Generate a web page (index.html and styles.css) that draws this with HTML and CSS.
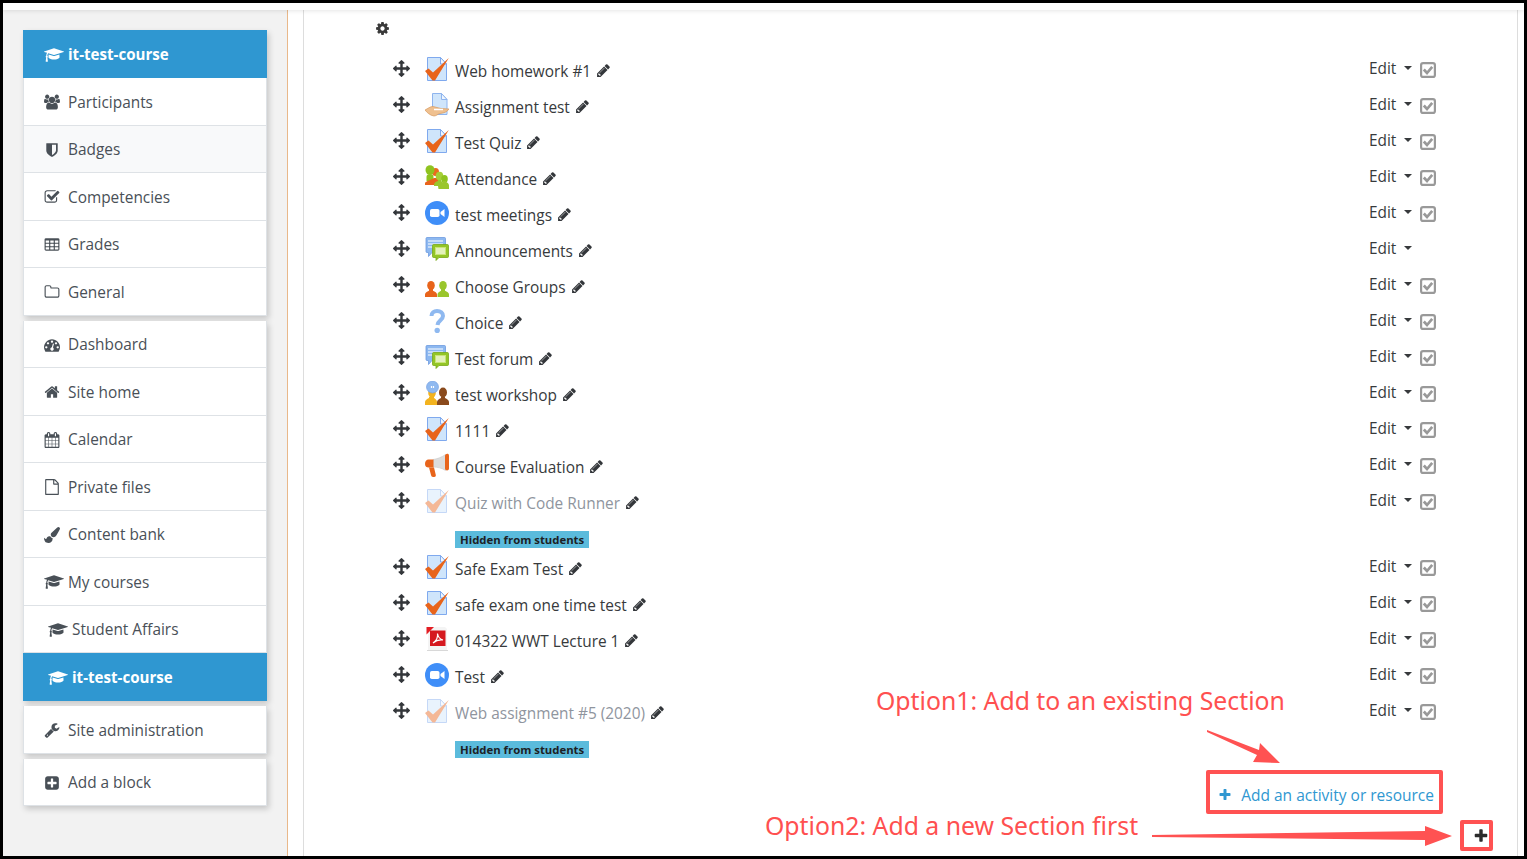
FILE: index.html
```html
<!DOCTYPE html>
<html lang="en">
<head>
<meta charset="utf-8">
<title>it-test-course</title>
<link rel="stylesheet" href="styles.css">
</head>
<body>
<svg class="defs" width="0" height="0" aria-hidden="true">
<defs>
<symbol id="fa-cap" viewBox="0 0 2304 1792"><path d="M1774 836l18 316q4 69-82 128t-235 93.5-323 34.5-323-34.5-235-93.5-82-128l18-316 574 181q22 7 48 7t48-7zm530-324q0 23-22 31l-1120 352q-4 1-10 1t-10-1l-652-206q-43 34-71 111.5t-34 178.5q63 36 63 109 0 69-58 107l58 433q2 14-8 25-9 11-24 11h-192q-15 0-24-11-10-11-8-25l58-433q-58-38-58-107 0-73 65-111 11-207 98-330l-333-104q-22-8-22-31t22-31l1120-352q4-1 10-1t10 1l1120 352q22 8 22 31z"/></symbol>
<symbol id="fa-users" viewBox="0 0 1920 1792"><path d="M593 896q-162 5-265 128h-134q-82 0-138-40.5t-56-118.5q0-353 124-353 6 0 43.5 21t97.5 42.5 119 21.5q67 0 133-23-5 37-5 66 0 139 81 256zm1071 637q0 120-73 189.5t-194 69.5h-874q-121 0-194-69.5t-73-189.5q0-53 3.5-103.5t14-109 26.5-108.5 43-97.5 62-81 85.5-53.5 111.5-20q10 0 43 21.5t73 48 107 48 135 21.5 135-21.5 107-48 73-48 43-21.5q61 0 111.5 20t85.5 53.5 62 81 43 97.5 26.5 108.5 14 109 3.5 103.5zm-1024-1277q0 106-75 181t-181 75-181-75-75-181 75-181 181-75 181 75 75 181zm704 384q0 159-112.5 271.5t-271.5 112.5-271.5-112.5-112.5-271.5 112.5-271.5 271.5-112.5 271.5 112.5 112.5 271.5zm576 225q0 78-56 118.5t-138 40.5h-134q-103-123-265-128 81-117 81-256 0-29-5-66 66 23 133 23 59 0 119-21.5t97.5-42.5 43.5-21q124 0 124 353zm-128-609q0 106-75 181t-181 75-181-75-75-181 75-181 181-75 181 75 75 181z"/></symbol>
<symbol id="fa-shield" viewBox="0 0 1792 1792"><path d="M1344 960v-640h-448v1137q119-63 213-137 235-184 235-360zm192-768v768q0 86-33.5 170.5t-83 150-118 127.5-126.5 103-121 77.5-89.5 49.5-42.5 20q-12 6-26 6t-26-6q-16-7-42.5-20t-89.5-49.5-121-77.5-126.5-103-118-127.5-83-150-33.5-170.5v-768q0-26 19-45t45-19h1152q26 0 45 19t19 45z"/></symbol>
<symbol id="fa-check" viewBox="0 0 1792 1792"><path d="M1472 930v318q0 119-84.5 203.5t-203.5 84.5h-832q-119 0-203.5-84.5t-84.5-203.5v-832q0-119 84.5-203.5t203.5-84.5h832q63 0 117 25 15 7 18 23 3 17-9 29l-49 49q-10 10-23 10-3 0-9-2-23-6-45-6h-832q-66 0-113 47t-47 113v832q0 66 47 113t113 47h832q66 0 113-47t47-113v-254q0-13 9-22l64-64q10-10 23-10 6 0 12 3 20 8 20 29zm231-489l-814 814q-24 24-57 24t-57-24l-430-430q-24-24-24-57t24-57l110-110q24-24 57-24t57 24l263 263 647-647q24-24 57-24t57 24l110 110q24 24 24 57t-24 57z"/></symbol>
<symbol id="fa-table" viewBox="0 0 1792 1792"><path d="M576 1376v-192q0-14-9-23t-23-9h-320q-14 0-23 9t-9 23v192q0 14 9 23t23 9h320q14 0 23-9t9-23zm0-384v-192q0-14-9-23t-23-9h-320q-14 0-23 9t-9 23v192q0 14 9 23t23 9h320q14 0 23-9t9-23zm512 384v-192q0-14-9-23t-23-9h-320q-14 0-23 9t-9 23v192q0 14 9 23t23 9h320q14 0 23-9t9-23zm-512-768v-192q0-14-9-23t-23-9h-320q-14 0-23 9t-9 23v192q0 14 9 23t23 9h320q14 0 23-9t9-23zm512 384v-192q0-14-9-23t-23-9h-320q-14 0-23 9t-9 23v192q0 14 9 23t23 9h320q14 0 23-9t9-23zm512 384v-192q0-14-9-23t-23-9h-320q-14 0-23 9t-9 23v192q0 14 9 23t23 9h320q14 0 23-9t9-23zm-512-768v-192q0-14-9-23t-23-9h-320q-14 0-23 9t-9 23v192q0 14 9 23t23 9h320q14 0 23-9t9-23zm512 384v-192q0-14-9-23t-23-9h-320q-14 0-23 9t-9 23v192q0 14 9 23t23 9h320q14 0 23-9t9-23zm0-384v-192q0-14-9-23t-23-9h-320q-14 0-23 9t-9 23v192q0 14 9 23t23 9h320q14 0 23-9t9-23zm128-320v1088q0 66-47 113t-113 47h-1344q-66 0-113-47t-47-113v-1088q0-66 47-113t113-47h1344q66 0 113 47t47 113z"/></symbol>
<symbol id="fa-folder" viewBox="0 0 1792 1792"><path d="M1600 1312v-704q0-40-28-68t-68-28h-704q-40 0-68-28t-28-68v-64q0-40-28-68t-68-28h-320q-40 0-68 28t-28 68v960q0 40 28 68t68 28h1216q40 0 68-28t28-68zm128-704v704q0 92-66 158t-158 66h-1216q-92 0-158-66t-66-158v-960q0-92 66-158t158-66h320q92 0 158 66t66 158v32h672q92 0 158 66t66 158z"/></symbol>
<symbol id="fa-gauge" viewBox="0 0 1792 1792"><path d="M384 1152q0-53-37.5-90.5t-90.5-37.5-90.5 37.5-37.5 90.5 37.5 90.5 90.5 37.5 90.5-37.5 37.5-90.5zm192-448q0-53-37.5-90.5t-90.5-37.5-90.5 37.5-37.5 90.5 37.5 90.5 90.5 37.5 90.5-37.5 37.5-90.5zm428 481l101-382q6-26-7.5-48.5t-38.5-29.5-48 6.5-30 39.5l-101 382q-60 5-107 43.5t-63 98.5q-20 77 20 146t117 89 146-20 89-117q16-60-6-117t-72-91zm660-33q0-53-37.5-90.5t-90.5-37.5-90.5 37.5-37.5 90.5 37.5 90.5 90.5 37.5 90.5-37.5 37.5-90.5zm-640-640q0-53-37.5-90.5t-90.5-37.5-90.5 37.5-37.5 90.5 37.5 90.5 90.5 37.5 90.5-37.5 37.5-90.5zm448 192q0-53-37.5-90.5t-90.5-37.5-90.5 37.5-37.5 90.5 37.5 90.5 90.5 37.5 90.5-37.5 37.5-90.5zm320 448q0 261-141 483-19 29-54 29h-1402q-35 0-54-29-141-221-141-483 0-182 71-348t191-286 286-191 348-71 348 71 286 191 191 286 71 348z"/></symbol>
<symbol id="fa-home" viewBox="0 0 1792 1792"><path d="M1472 992v480q0 26-19 45t-45 19h-384v-384h-256v384h-384q-26 0-45-19t-19-45v-480q0-1 .5-3t.5-3l575-474 575 474q1 2 1 6zm223-69l-62 74q-8 9-21 11h-3q-13 0-21-7l-692-577-692 577q-12 8-24 7-13-2-21-11l-62-74q-8-10-7-23.5t11-21.5l719-599q32-26 76-26t76 26l244 204v-195q0-14 9-23t23-9h192q14 0 23 9t9 23v408l219 182q10 8 11 21.5t-7 23.5z"/></symbol>
<symbol id="fa-calendar" viewBox="0 0 1792 1792"><path d="M192 1664h288v-288h-288v288zm352 0h320v-288h-320v288zm-352-352h288v-320h-288v320zm352 0h320v-320h-320v320zm-352-384h288v-288h-288v288zm736 736h320v-288h-320v288zm-384-736h320v-288h-320v288zm768 736h288v-288h-288v288zm-384-352h320v-320h-320v320zm-352-864v-288q0-13-9.5-22.5t-22.5-9.5h-64q-13 0-22.5 9.5t-9.5 22.5v288q0 13 9.5 22.5t22.5 9.5h64q13 0 22.5-9.5t9.5-22.5zm736 864h288v-320h-288v320zm-384-384h320v-288h-320v288zm384 0h288v-288h-288v288zm32-480v-288q0-13-9.5-22.5t-22.5-9.5h-64q-13 0-22.5 9.5t-9.5 22.5v288q0 13 9.5 22.5t22.5 9.5h64q13 0 22.5-9.5t9.5-22.5zm384-64v1280q0 52-38 90t-90 38h-1408q-52 0-90-38t-38-90v-1280q0-52 38-90t90-38h128v-96q0-66 47-113t113-47h64q66 0 113 47t47 113v96h384v-96q0-66 47-113t113-47h64q66 0 113 47t47 113v96h128q52 0 90 38t38 90z"/></symbol>
<symbol id="fa-file" viewBox="0 0 1792 1792"><path d="M1596 380q28 28 48 76t20 88v1152q0 40-28 68t-68 28h-1344q-40 0-68-28t-28-68v-1600q0-40 28-68t68-28h896q40 0 88 20t76 48zm-444-244v376h376q-10-29-22-41l-313-313q-12-12-41-22zm384 1528v-1024h-416q-40 0-68-28t-28-68v-416h-768v1536h1280z"/></symbol>
<symbol id="fa-brush" viewBox="0 0 1792 1792"><path d="M1615 0q70 0 122.5 46.5t52.5 116.5q0 63-45 151-332 629-465 752-97 91-218 91-126 0-216.5-92.5t-90.5-219.5q0-128 92-212l638-579q59-54 130-54zm-909 1034q39 76 106.5 130t150.5 76l1 71q4 213-129.5 347t-348.5 134q-123 0-218-46.5t-152.5-127.5-86.5-183-29-220q7 5 41 30t62 44.5 59 36.5 46 17q41 0 55-37 25-66 57.5-112.5t69.5-76 88-47.5 103-25.5 125-10.5z"/></symbol>
<symbol id="fa-wrench" viewBox="0 0 1792 1792"><path d="M448 1472q0-26-19-45t-45-19-45 19-19 45 19 45 45 19 45-19 19-45zm644-420l-682 682q-37 37-90 37-52 0-91-37l-106-108q-38-36-38-90 0-53 38-91l681-681q39 98 114.5 173.5t173.5 114.5zm634-435q0 39-23 106-47 134-164.5 217.5t-258.5 83.5q-185 0-316.5-131.5t-131.5-316.5 131.5-316.5 316.5-131.5q58 0 121.5 16.5t107.5 46.5q16 11 16 28t-16 28l-293 169v224l193 107q5-3 79-48.5t135.5-81 70.5-35.5q15 0 23.5 10t8.5 25z"/></symbol>
<symbol id="fa-plus-sq" viewBox="0 0 1792 1792"><path d="M1408 960v-128q0-26-19-45t-45-19h-320v-320q0-26-19-45t-45-19h-128q-26 0-45 19t-19 45v320h-320q-26 0-45 19t-19 45v128q0 26 19 45t45 19h320v320q0 26 19 45t45 19h128q26 0 45-19t19-45v-320h320q26 0 45-19t19-45zm256-544v960q0 119-84.5 203.5t-203.5 84.5h-960q-119 0-203.5-84.5t-84.5-203.5v-960q0-119 84.5-203.5t203.5-84.5h960q119 0 203.5 84.5t84.5 203.5z"/></symbol>
<symbol id="fa-plus" viewBox="0 0 1792 1792"><path d="M1600 736v192q0 40-28 68t-68 28h-416v416q0 40-28 68t-68 28h-192q-40 0-68-28t-28-68v-416h-416q-40 0-68-28t-28-68v-192q0-40 28-68t68-28h416v-416q0-40 28-68t68-28h192q40 0 68 28t28 68v416h416q40 0 68 28t28 68z"/></symbol>
<symbol id="fa-cog" viewBox="0 0 1792 1792"><path d="M1152 896q0-106-75-181t-181-75-181 75-75 181 75 181 181 75 181-75 75-181zm512-109v222q0 12-8 23t-20 13l-185 28q-19 54-39 91 35 50 107 138 10 12 10 25t-9 23q-27 37-99 108t-94 71q-12 0-26-9l-138-108q-44 23-91 38-16 136-29 186-7 28-36 28h-222q-14 0-24.5-8.5t-11.5-21.5l-28-184q-49-16-90-37l-141 107q-10 9-25 9-14 0-25-11-126-114-165-168-7-10-7-23 0-12 8-23 15-21 51-66.5t54-70.5q-27-50-41-99l-183-27q-13-2-21-12.5t-8-23.5v-222q0-12 8-23t19-13l186-28q14-46 39-92-40-57-107-138-10-12-10-24 0-10 9-23 26-36 98.5-107.5t94.5-71.5q13 0 26 10l138 107q44-23 91-38 16-136 29-186 7-28 36-28h222q14 0 24.5 8.5t11.5 21.5l28 184q49 16 90 37l142-107q9-9 24-9 13 0 25 10 129 119 165 170 7 8 7 22 0 12-8 23-15 21-51 66.5t-54 70.5q26 50 41 98l183 28q13 2 21 12.5t8 23.5z"/></symbol>
<symbol id="fa-arrows" viewBox="0 0 1792 1792"><path d="M1792 896q0 26-19 45l-256 256q-19 19-45 19t-45-19-19-45v-128h-384v384h128q26 0 45 19t19 45-19 45l-256 256q-19 19-45 19t-45-19l-256-256q-19-19-19-45t19-45 45-19h128v-384h-384v128q0 26-19 45t-45 19-45-19l-256-256q-19-19-19-45t19-45l256-256q19-19 45-19t45 19 19 45v128h384v-384h-128q-26 0-45-19t-19-45 19-45l256-256q19-19 45-19t45 19l256 256q19 19 19 45t-19 45-45 19h-128v384h384v-128q0-26 19-45t45-19 45 19l256 256q19 19 19 45z"/></symbol>
<symbol id="fa-pencil" viewBox="0 0 1792 1792"><path d="M491 1536l91-91-235-235-91 91v107h128v128h107zm523-928q0-22-22-22-10 0-17 7l-542 542q-7 7-7 17 0 22 22 22 10 0 17-7l542-542q7-7 7-17zm-54-192l416 416-832 832h-416v-416zm683 96q0 53-37 90l-166 166-416-416 166-165q36-38 90-38 53 0 91 38l235 234q37 39 37 91z"/></symbol>
<symbol id="box-check" viewBox="0 0 16 16"><rect x="1.100" y="1.100" width="13.800" height="13.800" rx="2" fill="#fff" stroke="#999" stroke-width="2.200"/><path d="M3.800 7.500l3.200 3.500 5.200-6.200" fill="none" stroke="#999" stroke-width="2.700"/></symbol>

<symbol id="m-quiz" viewBox="0 0 24 24"><path d="M2.500.5h13l6 6.500v16.500h-19z" fill="#cfe5fb" stroke="#7fa9ee"/><path d="M15.500.5v6.500h6z" fill="#eef6fe" stroke="#7fa9ee"/><path d="M0 14l3.500-2.500 4.500 4L23.800 1 10 23.500H7.500z" fill="#e8641b"/></symbol>
<symbol id="m-assign" viewBox="0 0 24 24"><path d="M7.500.5h9l5.500 6v15h-14.500z" fill="#cfe5fb" stroke="#8eb4ee"/><path d="M16.500.5v6h5.500z" fill="#eef6fe" stroke="#8eb4ee"/><path d="M0 17c3-1.500 5-3.500 8-3.500 3 .5 5 1.500 8 2l8 .5c-2 3-5 4-9 4.500-2 .5-4 2.500-6 2.500-4-.5-7-3.500-9-6z" fill="#efc08f" stroke="#d79a5f" stroke-width=".7"/><path d="M9 16.500h9" stroke="#fff" stroke-width="1.500"/></symbol>
<symbol id="m-attend" viewBox="0 0 24 24"><ellipse cx="10.500" cy="7" rx="3.500" ry="4" fill="#ea6b1f"/><ellipse cx="5" cy="5" rx="4.500" ry="4.800" fill="#8fc31f"/><path d="M1.500 16V12c0-2 1-3 3.500-3s3.500 1 3.500 3v4z" fill="#8fc31f"/><path d="M0 20v-2c1-2 6-3 9-5h6v7z" fill="#e8641b"/><ellipse cx="14.500" cy="11" rx="3.800" ry="4.300" fill="#a5cf38"/><ellipse cx="19.500" cy="14" rx="3.300" ry="4" fill="#8fc31f"/><path d="M9 20c0-2.500 2-3.500 4-4v-1h3v1c1 .5 1.500 1 2 1.500V16l3 0v1c1.500.5 3 1.500 3 3.500V24H13.500L13 21H9z" fill="#9ac62c"/></symbol>
<symbol id="m-zoom" viewBox="0 0 24 24"><circle cx="12" cy="12" r="12" fill="#3f8ef8"/><rect x="5" y="8" width="9.500" height="8" rx="1.800" fill="#fff"/><path d="M15.500 11l4-3v8l-4-3z" fill="#fff"/></symbol>
<symbol id="m-forum" viewBox="0 0 24 24"><path d="M1 1.500c0-.6.500-1 1-1h17.500c.6 0 1 .4 1 1v13c0 .6-.4 1-1 1H7l-3.500 4v-4H2c-.6 0-1-.4-1-1z" fill="#8db8f0" stroke="#6d9be0" stroke-width=".8"/><path d="M3 4h15M3 7h15M3 10h8" stroke="#fff" stroke-width="1.200"/><path d="M7.500 8.500c0-.5.400-1 1-1h14c.6 0 1 .5 1 1v11c0 .6-.4 1-1 1H14l-3 3v-3H8.500c-.6 0-1-.4-1-1z" fill="#93c526" stroke="#7aa819" stroke-width=".8"/><rect x="10" y="10" width="11" height="8" fill="#c8e477"/><path d="M11 12h9M11 14h9M11 16h9" stroke="#fff"/></symbol>
<symbol id="m-groups" viewBox="0 0 24 24"><ellipse cx="6" cy="12.500" rx="3.800" ry="4.500" fill="#e8641b"/><path d="M0 24v-2.500c0-2 2-2.800 4-3.800v-2h4v2c2 1 4 1.800 4 3.800V24z" fill="#e8641b"/><ellipse cx="18" cy="12.500" rx="3.800" ry="4.500" fill="#9ac62c"/><path d="M12.500 24v-2.500c0-2 2-2.800 3.500-3.800v-2h4v2c2 1 4 1.800 4 3.800V24z" fill="#9ac62c"/></symbol>
<symbol id="m-choice" viewBox="0 0 24 24"><path d="M6.500 7c0-3.500 2.500-5 5.500-5 3.500 0 6 2 6 5 0 4-5 4.500-5.500 9" fill="none" stroke="#8fb9f0" stroke-width="4"/><circle cx="12.200" cy="21.500" r="2.700" fill="#8fb9f0"/></symbol>
<symbol id="m-workshop" viewBox="0 0 24 24"><ellipse cx="18" cy="11.500" rx="4" ry="5" fill="#8a4a1c"/><path d="M12 24v-3c0-2 2-3 4-4v-1h4v1c2 1 4 2 4 4v3z" fill="#8a4a1c"/><ellipse cx="7" cy="12" rx="3.800" ry="4.500" fill="#f3b31e"/><path d="M0 24v-3c0-2 2-3 4-4v-1h5v1c1 .5 3 2 3 4v3z" fill="#f3b31e"/><circle cx="7.500" cy="6" r="6" fill="#8fb9f0" stroke="#6d9be0" stroke-width=".6"/><path d="M6.500 5v2M8.500 5v2" stroke="#fff" stroke-width="1.200"/></symbol>
<symbol id="m-feedback" viewBox="0 0 24 24"><path d="M8 6.500C12 6 17 4 20.500 1.500v16C17 15 12 14 8 14z" fill="#dcdcdc" stroke="#c4c4c4" stroke-width=".5"/><path d="M0 11c0-3 1.500-4.500 3.500-4.500H8.500V14.500H3.500C1.500 14.500 0 13.500 0 11z" fill="#e8641b"/><path d="M4 14.500h5l1.800 7.500c.2 1.200-.5 2-1.500 2H8c-1 0-1.800-.8-2-2z" fill="#e8641b"/><path d="M20 3C20 .5 24 0 24 2.500v13c0 2.500-4 2.500-4 0z" fill="#e8641b"/></symbol>
<symbol id="m-pdf" viewBox="0 0 24 24"><path d="M3 0h17l2 2v21H3z" fill="#f4f4f4"/><path d="M2 23.500h21" stroke="#d8d8d8"/><path d="M1.500 0H9L1.500 7.500z" fill="#e31e24"/><rect x="5" y="3.500" width="15.500" height="15.500" fill="#d5191f"/><path d="M8 16c3-2 5-6 4.500-9.500 .5 3 2 5.500 5.500 6.500-3-.5-7 .5-10 3z" fill="none" stroke="#fff" stroke-width="1.200"/></symbol>
</defs>
</svg>

<div class="frame">
  <div class="topbar"></div>
  <div class="layout">
    <aside class="sidebar">
      <nav class="panel">
        <a class="item head"><svg class="fi wide"><use href="#fa-cap"/></svg>it-test-course</a>
        <a class="item"><svg class="fi"><use href="#fa-users"/></svg>Participants</a>
        <a class="item tint"><svg class="fi"><use href="#fa-shield"/></svg>Badges</a>
        <a class="item"><svg class="fi"><use href="#fa-check"/></svg>Competencies</a>
        <a class="item"><svg class="fi"><use href="#fa-table"/></svg>Grades</a>
        <a class="item"><svg class="fi"><use href="#fa-folder"/></svg>General</a>
      </nav>
      <nav class="panel">
        <a class="item"><svg class="fi"><use href="#fa-gauge"/></svg>Dashboard</a>
        <a class="item"><svg class="fi"><use href="#fa-home"/></svg>Site home</a>
        <a class="item"><svg class="fi"><use href="#fa-calendar"/></svg>Calendar</a>
        <a class="item"><svg class="fi"><use href="#fa-file"/></svg>Private files</a>
        <a class="item"><svg class="fi"><use href="#fa-brush"/></svg>Content bank</a>
        <a class="item"><svg class="fi wide"><use href="#fa-cap"/></svg>My courses</a>
        <a class="item sub"><svg class="fi wide"><use href="#fa-cap"/></svg>Student Affairs</a>
        <a class="item head sub"><svg class="fi wide"><use href="#fa-cap"/></svg>it-test-course</a>
      </nav>
      <nav class="panel">
        <a class="item"><svg class="fi"><use href="#fa-wrench"/></svg>Site administration</a>
      </nav>
      <nav class="panel">
        <a class="item"><svg class="fi"><use href="#fa-plus-sq"/></svg>Add a block</a>
      </nav>
    </aside>
    <div class="gutter"></div>
    <main class="main">
      <svg class="gear"><use href="#fa-cog"/></svg>
      <ul class="activities">
        <li class="row"><svg class="move"><use href="#fa-arrows"/></svg><svg class="micon"><use href="#m-quiz"/></svg><span class="name">Web homework #1</span><svg class="pencil"><use href="#fa-pencil"/></svg><span class="actions"><span class="edit">Edit</span><i class="caret"></i><svg class="box"><use href="#box-check"/></svg></span></li>
        <li class="row"><svg class="move"><use href="#fa-arrows"/></svg><svg class="micon"><use href="#m-assign"/></svg><span class="name">Assignment test</span><svg class="pencil"><use href="#fa-pencil"/></svg><span class="actions"><span class="edit">Edit</span><i class="caret"></i><svg class="box"><use href="#box-check"/></svg></span></li>
        <li class="row"><svg class="move"><use href="#fa-arrows"/></svg><svg class="micon"><use href="#m-quiz"/></svg><span class="name">Test Quiz</span><svg class="pencil"><use href="#fa-pencil"/></svg><span class="actions"><span class="edit">Edit</span><i class="caret"></i><svg class="box"><use href="#box-check"/></svg></span></li>
        <li class="row"><svg class="move"><use href="#fa-arrows"/></svg><svg class="micon"><use href="#m-attend"/></svg><span class="name">Attendance</span><svg class="pencil"><use href="#fa-pencil"/></svg><span class="actions"><span class="edit">Edit</span><i class="caret"></i><svg class="box"><use href="#box-check"/></svg></span></li>
        <li class="row"><svg class="move"><use href="#fa-arrows"/></svg><svg class="micon"><use href="#m-zoom"/></svg><span class="name">test meetings</span><svg class="pencil"><use href="#fa-pencil"/></svg><span class="actions"><span class="edit">Edit</span><i class="caret"></i><svg class="box"><use href="#box-check"/></svg></span></li>
        <li class="row"><svg class="move"><use href="#fa-arrows"/></svg><svg class="micon"><use href="#m-forum"/></svg><span class="name">Announcements</span><svg class="pencil"><use href="#fa-pencil"/></svg><span class="actions"><span class="edit">Edit</span><i class="caret"></i></span></li>
        <li class="row"><svg class="move"><use href="#fa-arrows"/></svg><svg class="micon"><use href="#m-groups"/></svg><span class="name">Choose Groups</span><svg class="pencil"><use href="#fa-pencil"/></svg><span class="actions"><span class="edit">Edit</span><i class="caret"></i><svg class="box"><use href="#box-check"/></svg></span></li>
        <li class="row"><svg class="move"><use href="#fa-arrows"/></svg><svg class="micon"><use href="#m-choice"/></svg><span class="name">Choice</span><svg class="pencil"><use href="#fa-pencil"/></svg><span class="actions"><span class="edit">Edit</span><i class="caret"></i><svg class="box"><use href="#box-check"/></svg></span></li>
        <li class="row"><svg class="move"><use href="#fa-arrows"/></svg><svg class="micon"><use href="#m-forum"/></svg><span class="name">Test forum</span><svg class="pencil"><use href="#fa-pencil"/></svg><span class="actions"><span class="edit">Edit</span><i class="caret"></i><svg class="box"><use href="#box-check"/></svg></span></li>
        <li class="row"><svg class="move"><use href="#fa-arrows"/></svg><svg class="micon"><use href="#m-workshop"/></svg><span class="name">test workshop</span><svg class="pencil"><use href="#fa-pencil"/></svg><span class="actions"><span class="edit">Edit</span><i class="caret"></i><svg class="box"><use href="#box-check"/></svg></span></li>
        <li class="row"><svg class="move"><use href="#fa-arrows"/></svg><svg class="micon"><use href="#m-quiz"/></svg><span class="name">1111</span><svg class="pencil"><use href="#fa-pencil"/></svg><span class="actions"><span class="edit">Edit</span><i class="caret"></i><svg class="box"><use href="#box-check"/></svg></span></li>
        <li class="row"><svg class="move"><use href="#fa-arrows"/></svg><svg class="micon"><use href="#m-feedback"/></svg><span class="name">Course Evaluation</span><svg class="pencil"><use href="#fa-pencil"/></svg><span class="actions"><span class="edit">Edit</span><i class="caret"></i><svg class="box"><use href="#box-check"/></svg></span></li>
        <li class="row dim"><svg class="move"><use href="#fa-arrows"/></svg><svg class="micon"><use href="#m-quiz"/></svg><span class="name">Quiz with Code Runner</span><svg class="pencil"><use href="#fa-pencil"/></svg><span class="actions"><span class="edit">Edit</span><i class="caret"></i><svg class="box"><use href="#box-check"/></svg></span></li>
        <li class="note"><span class="badge">Hidden from students</span></li>
        <li class="row"><svg class="move"><use href="#fa-arrows"/></svg><svg class="micon"><use href="#m-quiz"/></svg><span class="name">Safe Exam Test</span><svg class="pencil"><use href="#fa-pencil"/></svg><span class="actions"><span class="edit">Edit</span><i class="caret"></i><svg class="box"><use href="#box-check"/></svg></span></li>
        <li class="row"><svg class="move"><use href="#fa-arrows"/></svg><svg class="micon"><use href="#m-quiz"/></svg><span class="name">safe exam one time test</span><svg class="pencil"><use href="#fa-pencil"/></svg><span class="actions"><span class="edit">Edit</span><i class="caret"></i><svg class="box"><use href="#box-check"/></svg></span></li>
        <li class="row"><svg class="move"><use href="#fa-arrows"/></svg><svg class="micon"><use href="#m-pdf"/></svg><span class="name">014322 WWT Lecture 1</span><svg class="pencil"><use href="#fa-pencil"/></svg><span class="actions"><span class="edit">Edit</span><i class="caret"></i><svg class="box"><use href="#box-check"/></svg></span></li>
        <li class="row"><svg class="move"><use href="#fa-arrows"/></svg><svg class="micon"><use href="#m-zoom"/></svg><span class="name">Test</span><svg class="pencil"><use href="#fa-pencil"/></svg><span class="actions"><span class="edit">Edit</span><i class="caret"></i><svg class="box"><use href="#box-check"/></svg></span></li>
        <li class="row dim"><svg class="move"><use href="#fa-arrows"/></svg><svg class="micon"><use href="#m-quiz"/></svg><span class="name">Web assignment #5 (2020)</span><svg class="pencil"><use href="#fa-pencil"/></svg><span class="actions"><span class="edit">Edit</span><i class="caret"></i><svg class="box"><use href="#box-check"/></svg></span></li>
        <li class="note"><span class="badge">Hidden from students</span></li>
      </ul>
      <div class="add-row"><a class="add-link"><svg class="add-plus"><use href="#fa-plus"/></svg>Add an activity or resource</a></div>
      <div class="section-row"><svg class="section-plus"><use href="#fa-plus"/></svg></div>
    </main>
  </div>
  <div class="callout callout-one">Option1: Add to an existing Section</div>
  <div class="callout callout-two">Option2: Add a new Section first</div>
  <div class="mark mark-add"></div>
  <div class="mark mark-section"></div>
  <svg class="arrows" width="1527" height="859" viewBox="0 0 1527 859">
    <polygon points="1207,730 1259,750 1260,743 1280,763 1253,762 1257,755 1207,732"/>
    <polygon points="1152,835 1425,831 1425,826 1452,836 1425,846 1425,840 1152,837"/>
  </svg>
</div>
</body>
</html>
```
FILE: styles.css
```css
* { box-sizing: border-box; }
html, body { margin: 0; padding: 0; }
body {
  width: 1527px;
  height: 859px;
  overflow: hidden;
  background: #fff;
  font-family: "Open Sans", "Noto Sans", sans-serif;
  font-size: 15.4px;
  color: #373a3c;
}
.defs { display: block; width: 0; height: 0; position: absolute; }
.frame {
  position: relative;
  width: 1527px;
  height: 859px;
  border: 3px solid #000;
  display: flex;
  flex-direction: column;
  overflow: hidden;
  background: #fff;
}
.topbar {
  height: 7px;
  flex: none;
  background: #fff;
  box-shadow: 0 1px 4px rgba(0, 0, 0, .1);
  position: relative;
  z-index: 2;
}
.layout { flex: 1; display: flex; min-height: 0; }

.sidebar {
  width: 285px;
  flex: none;
  background: #f2f2f2;
  border-right: 1px solid #e9b88a;
  padding: 20px 0 0 20px;
}
.panel {
  width: 244px;
  margin-bottom: 5px;
  display: flex;
  flex-direction: column;
  box-shadow: 2px 3px 6px rgba(0, 0, 0, .18);
}
.item {
  display: flex;
  align-items: center;
  height: 47.5px;
  padding: 2px 0 0 20px;
  color: #495057;
  background: #fff;
  border: 1px solid #dee2e6;
  border-top: 0;
  line-height: 1;
}
.item.tint { background: #f8f9fa; }
.item.sub { padding-left: 24px; }
.item.head {
  height: 48px;
  background: #2f97d1;
  border-color: #2f97d1;
  color: #fff;
  font-size: 15.1px;
  font-weight: 700;
}
.fi {
  width: 16px;
  height: 16px;
  margin-right: 8px;
  flex: none;
  fill: currentColor;
}
.fi.wide { width: 20px; margin-right: 4px; }

.gutter { width: 16px; flex: none; border-right: 1px solid #ddd; }

.main {
  flex: 1;
  min-width: 0;
  border-right: 1px solid #ddd;
  margin-right: 6px;
  padding: 11px 81px 0 71px;
  display: flex;
  flex-direction: column;
}
.gear { width: 15px; height: 15px; fill: #3a3a3a; flex: none; margin-bottom: 18px; }
.activities { list-style: none; margin: 0 0 0 18px; padding: 0; }
.row { display: flex; align-items: flex-start; height: 36px; }
.move { width: 17px; height: 17px; margin: 6px 15px 0 0; fill: #33363a; flex: none; }
.micon { width: 24px; height: 24px; margin: 3px 6px 0 0; flex: none; }
.name { line-height: 20px; margin-top: 8px; }
.pencil { width: 15px; height: 15px; margin: 9px 0 0 5px; fill: #33363a; flex: none; }
.actions { margin-left: auto; width: 68px; display: flex; align-items: flex-start; flex: none; }
.edit { line-height: 20px; margin: 4.500px 0 0 1px; width: 35px; flex: none; }
.caret {
  width: 0;
  height: 0;
  margin: 12px 8px 0 0;
  border: solid transparent;
  border-width: 4.500px 4.500px 0;
  border-top-color: #373a3c;
  flex: none;
}
.box { width: 16px; height: 16px; margin-top: 8px; flex: none; }
.dim .name { color: #8f959e; }
.dim .micon { opacity: .45; }
.note { height: 30px; padding: 9px 0 0 62px; line-height: 0; }
.badge {
  display: inline-block;
  height: 17px;
  line-height: 17px;
  padding: 0 5px;
  background: #5bbbdc;
  color: #1d2125;
  font-size: 11.35px;
  font-weight: 700;
}
.add-row { display: flex; justify-content: flex-end; margin-top: 23px; }
.add-link { display: flex; align-items: center; color: #2f97d1; line-height: 20px; margin-right: 2px; font-size: 15.5px; }
.add-plus { width: 14px; height: 14px; fill: #2f97d1; margin-right: 9px; }
.section-row { display: flex; justify-content: flex-end; margin-top: 23px; }
.section-plus { width: 16px; height: 16px; fill: #2b2b2b; margin-right: -53px; }

.callout { position: absolute; color: #ff5050; font-family: "Noto Sans", sans-serif; font-size: 24.8px; line-height: 34px; white-space: nowrap; }
.callout-one { left: 873px; top: 680px; }
.callout-two { left: 762px; top: 805px; }
.mark { position: absolute; border: 4px solid #ff5252; border-radius: 2px; }
.mark-add { left: 1203px; top: 767px; width: 237px; height: 44px; }
.mark-section { left: 1457px; top: 817px; width: 33px; height: 31px; }
.arrows { position: absolute; left: -3px; top: -3px; fill: #ff5252; pointer-events: none; }
```
